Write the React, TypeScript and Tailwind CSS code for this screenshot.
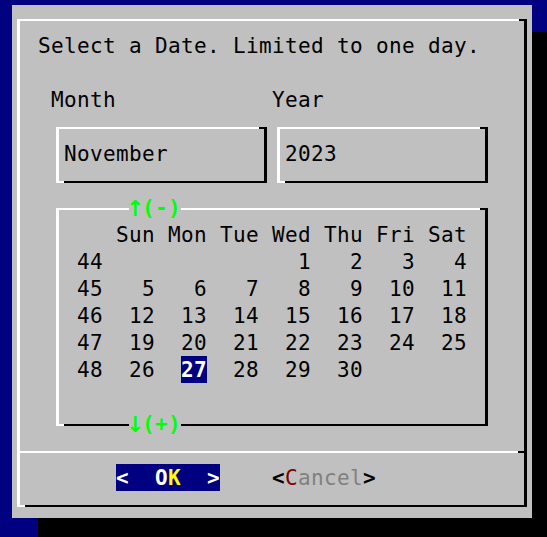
import React from "react";

// one terminal cell is 13px wide and 27px tall
const weeks: [string, (number | null)[]][] = [
  ["44", [null, null, null, 1, 2, 3, 4]],
  ["45", [5, 6, 7, 8, 9, 10, 11]],
  ["46", [12, 13, 14, 15, 16, 17, 18]],
  ["47", [19, 20, 21, 22, 23, 24, 25]],
  ["48", [26, 27, 28, 29, 30, null, null]],
];
const dayNames = ["Sun", "Mon", "Tue", "Wed", "Thu", "Fri", "Sat"];
const selected = 27;

const TermBox = ({
  className,
  children,
}: {
  className: string;
  children?: React.ReactNode;
}) => {
  return (
    <div
      className={
        "relative border-t-2 border-l-[3px] border-r-[3px] border-b-2 border-t-white border-l-white border-r-black border-b-black " +
        className
      }
    >
      {/* corner pieces: top-right is drawn dark, bottom-left light */}
      <span className="absolute -top-[2px] -right-[3px] h-[2px] w-[8px] bg-black" />
      <span className="absolute -bottom-[2px] -left-[3px] h-[2px] w-[8px] bg-white" />
      {children}
    </div>
  );
};

const Arrow = ({ label, arrow }: { label: string; arrow: string }) => (
  <span className="flex h-[27px] bg-[#c0c0c0] font-bold text-[#00ff00]">
    <span className="w-[13px] shrink-0">
      <span
        className="-ml-[3px] inline-block text-[22px] tracking-[-5.4px]"
        style={{ fontFamily: '"DejaVu Sans", sans-serif' }}
      >
        {arrow}
      </span>
    </span>
    <span>{label}</span>
  </span>
);

const App = () => {
  return (
    <div
      className="h-[537px] w-full overflow-hidden bg-[#000080] pl-[12px] pt-[5px] text-[21px] leading-[29px] tracking-[0.36px] text-black"
      style={{ fontFamily: '"DejaVu Sans Mono", "Liberation Mono", monospace' }}
    >
      <div className="h-[513px] w-[520px] bg-[#c0c0c0] pl-[5px] pt-[14px] shadow-[26px_27px_0_0_#000]">
        <TermBox className="flex h-[488px] w-[510px] flex-col">
          <div className="mt-[11px] h-[27px] whitespace-pre pl-[18px]">
            Select a Date. Limited to one day.
          </div>
          <div className="h-[27px]" />
          <div className="flex h-[27px] pl-[31px]">
            <span className="w-[221px]">Month</span>
            <span>Year</span>
          </div>

          <div className="mt-[14px] flex gap-[10px] pl-[36px]">
            <TermBox className="h-[56px] w-[211px] pl-[5px] pt-[11px]">
              <div className="h-[27px]">November</div>
            </TermBox>
            <TermBox className="h-[56px] w-[211px] pl-[5px] pt-[11px]">
              <div className="h-[27px]">2023</div>
            </TermBox>
          </div>

          <div className="mt-[25px] pl-[36px]">
            <TermBox className="h-[218px] w-[432px] pl-[5px] pt-[11px]">
              <span className="absolute -top-[16px] left-[70px]">
                <Arrow arrow="↑" label="(-)" />
              </span>
              <div className="flex h-[27px]">
                <span className="w-[52px]" />
                <div className="flex gap-[13px]">
                  {dayNames.map((d) => (
                    <span key={d} className="w-[39px]">
                      {d}
                    </span>
                  ))}
                </div>
              </div>
              {weeks.map(([wk, days]) => (
                <div key={wk} className="flex h-[27px]">
                  <span className="w-[52px] pl-[13px]">{wk}</span>
                  <div className="flex gap-[13px]">
                    {days.map((d, i) => (
                      <span key={i} className="w-[39px] text-right">
                        {d === selected ? (
                          <span className="inline-block h-[27px] bg-[#000080] font-bold text-white">
                            {d}
                          </span>
                        ) : (
                          d
                        )}
                      </span>
                    ))}
                  </div>
                </div>
              ))}
              <span className="absolute top-[200px] left-[70px]">
                <Arrow arrow="↓" label="(+)" />
              </span>
            </TermBox>
          </div>

          <div className="mt-[25px] flex h-[2px]">
            <div className="flex-1 bg-white" />
            <div className="w-[6px] bg-black" />
          </div>

          <div className="mt-[11px] flex h-[27px] pl-[96px]">
            <span className="w-[104px] whitespace-pre bg-[#000080] font-bold text-white">
              {"<  O"}
              <span className="text-[#ffff00]">K</span>
              {"  >"}
            </span>
            <span className="ml-[52px] whitespace-pre">
              <span className="font-bold">{"<"}</span>
              <span className="text-[#800000]">C</span>
              <span className="text-[#808080]">ancel</span>
              <span className="font-bold">{">"}</span>
            </span>
          </div>
        </TermBox>
      </div>
    </div>
  );
};

export default App;
